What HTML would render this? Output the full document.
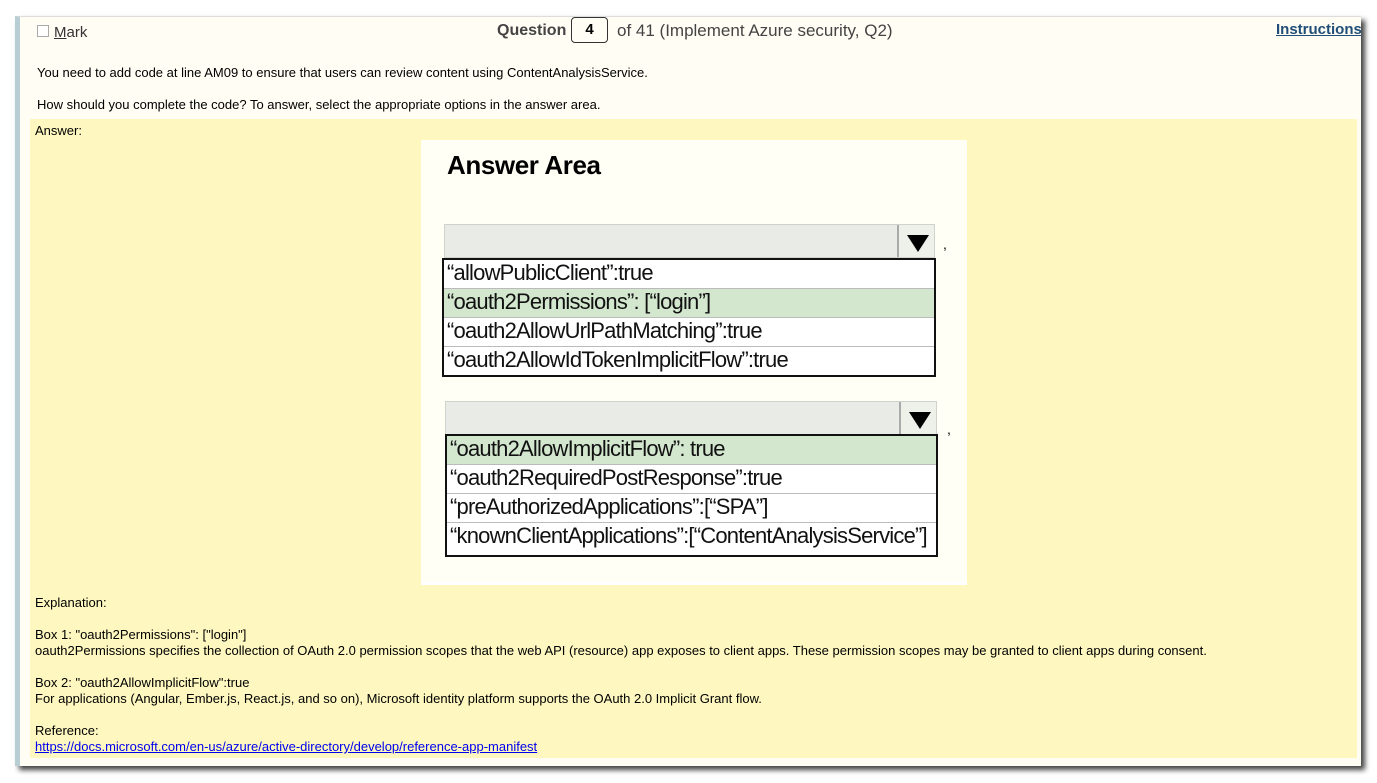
<!DOCTYPE html>
<html><head><meta charset="utf-8"><style>
*{margin:0;padding:0;box-sizing:border-box}
body{width:1377px;height:783px;background:#fff;position:relative;overflow:hidden;font-family:"Liberation Sans",Arial,sans-serif;color:#000}
.panel{position:absolute;left:15px;top:16px;width:1346px;height:750px;background:#fffdf4;box-shadow:4px 4px 5px #444;border-left:5px solid #b8cdd4;border-top:1px solid #ddd}
.a{position:absolute;white-space:nowrap}
.yellow{position:absolute;left:30px;top:119px;width:1327px;height:639px;background:#fef8c0}
.s{font-size:13px}
.img{position:absolute;left:421px;top:140px;width:546px;height:442px;background:#fffff6}
.hdr{position:absolute;background:#e9ece6;border:1px solid #d0d3cc}
.btn{position:absolute;top:0;right:0;width:37px;height:100%;border-left:2px solid #aaa;background:#eef0ea}
.btn:after{content:"";position:absolute;left:8px;top:10px;border-left:11px solid transparent;border-right:11px solid transparent;border-top:17px solid #000}
.list{position:absolute;border:2px solid #111;background:#fff}
.row{height:29px;border-bottom:1px solid #bbb;font-size:22px;line-height:26px;padding-left:3px;letter-spacing:-0.8px;white-space:nowrap;color:#111}
.row:last-child{border-bottom:none}
.g{background:#d3e7cf}
</style></head><body>
<div class="panel"></div>
<div class="a" style="left:37px;top:25px;width:12px;height:12px;border:1px solid #aaa;background:#fff"></div>
<div class="a" style="left:54px;top:24px;font-size:15px;color:#333"><u>M</u>ark</div>
<div class="a" style="left:497px;top:22px;font-size:16px;font-weight:bold;color:#444">Question</div>
<div class="a" style="left:571px;top:17px;width:37px;height:26px;border:1.5px solid #333;border-radius:4px;font-size:15px;font-weight:bold;text-align:center;line-height:23px">4</div>
<div class="a" style="left:617px;top:21px;font-size:17px;color:#444">of 41 (Implement Azure security, Q2)</div>
<div class="a" style="left:1276px;top:21px;font-size:15px;font-weight:bold;color:#1f4e79;text-decoration:underline">Instructions</div>
<div class="a s" style="left:37px;top:65px">You need to add code at line AM09 to ensure that users can review content using ContentAnalysisService.</div>
<div class="a s" style="left:37px;top:97px">How should you complete the code? To answer, select the appropriate options in the answer area.</div>
<div class="yellow"></div>
<div class="a s" style="left:35px;top:123px">Answer:</div>
<div class="img">
 <div class="a" style="left:26px;top:10px;font-size:26px;font-weight:bold;letter-spacing:-0.4px">Answer Area</div>
 <div class="hdr" style="left:23px;top:84px;width:491px;height:34px"><div class="btn"></div></div>
 <div class="a" style="left:522px;top:96px;font-size:14px">,</div>
 <div class="list" style="left:21px;top:118px;width:494px;height:119px">
  <div class="row">“allowPublicClient”:true</div>
  <div class="row g">“oauth2Permissions”: [“login”]</div>
  <div class="row">“oauth2AllowUrlPathMatching”:true</div>
  <div class="row">“oauth2AllowIdTokenImplicitFlow”:true</div>
 </div>
 <div class="hdr" style="left:24px;top:261px;width:492px;height:34px"><div class="btn"></div></div>
 <div class="a" style="left:526px;top:281px;font-size:14px">,</div>
 <div class="list" style="left:24px;top:294px;width:493px;height:123px">
  <div class="row g">“oauth2AllowImplicitFlow”: true</div>
  <div class="row">“oauth2RequiredPostResponse”:true</div>
  <div class="row">“preAuthorizedApplications”:[“SPA”]</div>
  <div class="row">“knownClientApplications”:[“ContentAnalysisService”]</div>
 </div>
</div>
<div class="a" style="left:421px;top:582px;width:546px;height:3px;background:#fff"></div>
<div class="a s" style="left:35px;top:595px">Explanation:</div>
<div class="a s" style="left:35px;top:627px">Box 1: "oauth2Permissions": ["login"]</div>
<div class="a s" style="left:35px;top:643px">oauth2Permissions specifies the collection of OAuth 2.0 permission scopes that the web API (resource) app exposes to client apps. These permission scopes may be granted to client apps during consent.</div>
<div class="a s" style="left:35px;top:675px">Box 2: "oauth2AllowImplicitFlow":true</div>
<div class="a s" style="left:35px;top:691px">For applications (Angular, Ember.js, React.js, and so on), Microsoft identity platform supports the OAuth 2.0 Implicit Grant flow.</div>
<div class="a s" style="left:35px;top:723px">Reference:</div>
<div class="a s" style="left:35px;top:739px;color:#00e;text-decoration:underline">https://docs.microsoft.com/en-us/azure/active-directory/develop/reference-app-manifest</div>
</body></html>
